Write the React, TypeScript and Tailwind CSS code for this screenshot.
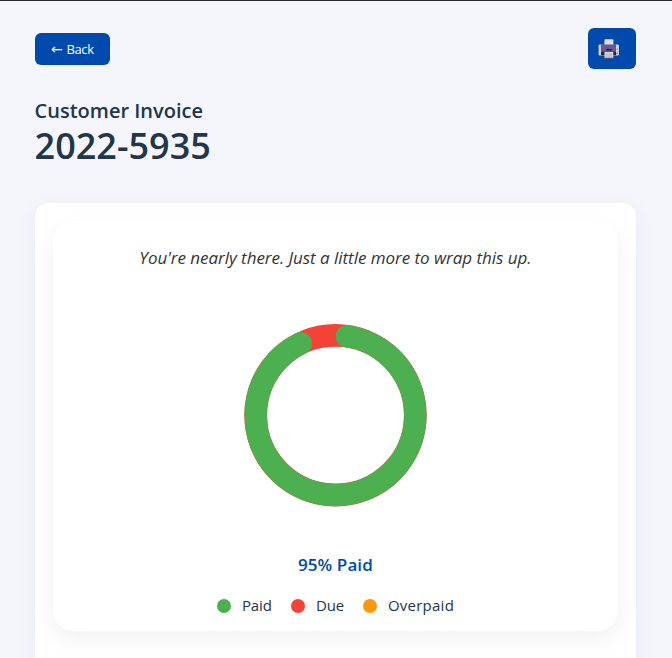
import React from "react";

const legend = [
  { label: "Paid", dot: "bg-[#4caf50]", text: "w-[31px]" },
  { label: "Due", dot: "bg-[#f44336]", text: "w-[29px]" },
  { label: "Overpaid", dot: "bg-[#ff9800]", text: "w-[66px] tracking-[0.25px]" },
];

function PrinterIcon() {
  return (
    <svg width="22" height="20" viewBox="0 0 22 20">
      <rect x="0.6" y="5.5" width="20.3" height="11" rx="1.2" fill="#d5d3d8" />
      <rect x="3" y="5" width="15" height="8.5" fill="#635994" />
      <path d="M3 12.8h15v3.4H3z" fill="#28233d" />
      <rect x="6.4" y="0.2" width="9" height="5.4" rx="0.7" fill="#dedbdd" />
      <rect x="8" y="10" width="6" height="1.5" rx="0.7" fill="#211f32" />
      <path d="M6.5 13h8.8v6H6.5z" fill="#d8d5dc" />
      <path d="M7.5 15.2h6.8M7.5 17h6.8" stroke="#aaa5b2" strokeWidth="0.7" />
      <path d="M6.2 19.2h9.4" stroke="#6a517f" strokeWidth="0.9" />
      <rect x="18.4" y="9" width="1.3" height="2" fill="#b5a9bc" />
      <rect x="18.4" y="13.5" width="1.5" height="1.7" fill="#e85991" />
    </svg>
  );
}

function PaymentRing() {
  return (
    <svg width="184" height="184" viewBox="0 0 184 184">
      <circle cx="92.5" cy="92.2" r="79.8" fill="none" stroke="#f44336" strokeWidth="22.8" />
      <circle
        cx="92.5" cy="92.2" r="79.8" fill="none" stroke="#4caf50" strokeWidth="22.4"
        strokeLinecap="round" pathLength="360" strokeDasharray="326 34" transform="rotate(-81.8 92.5 92.2)"
      />
    </svg>
  );
}

export default function App() {
  return (
    <main className="h-[658px] overflow-hidden border-t border-[#292a2d] bg-[#f4f6fb] px-[34.6px] pt-[27.4px] font-['Open_Sans','Noto_Sans',sans-serif] text-[#22364a]">
      <header className="flex w-[601.8px] items-start justify-between">
        <button className="mt-[5px] flex h-8 w-[75px] items-center justify-center gap-1 rounded-md bg-[#004aad] text-[13px] font-medium tracking-[-0.4px] whitespace-nowrap text-white">
          <span className="w-[12px] font-['DejaVu_Sans'] text-[14px] leading-4 font-normal">←</span>
          <span>Back</span>
        </button>
        <button aria-label="Print" className="flex h-[41px] w-[48.6px] items-center rounded-md bg-[#004aad] pl-[10px]">
          <PrinterIcon />
        </button>
      </header>
      <div className="mt-[27.6px] whitespace-nowrap">
        <h2 className="text-[20px] leading-[28px] font-[550]">Customer Invoice</h2>
        <h1 className="-mt-[0.6px] text-[36px] leading-[44px] font-[550]">2022-5935</h1>
      </div>
      <section className="mt-[34.6px] h-[500px] w-[601.6px] rounded-[14px] bg-white p-[18px] shadow-[0_4px_20px_rgba(0,0,0,0.05)]">
        <div className="flex h-[410px] flex-col items-center rounded-[20px] bg-white shadow-[0_8px_24px_rgba(0,0,0,0.06)]">
          <p className="mt-[25px] text-[17px] leading-6 tracking-[-0.04px] whitespace-nowrap text-[#333] italic">You're nearly there. Just a little more to wrap this up.</p>
          <div className="mt-[53px] h-[184px] w-[184px]"><PaymentRing /></div>
          <p className="mt-[46px] text-[17px] leading-6 font-semibold tracking-[0.1px] text-[#004aad]">95% Paid</p>
          <ul className="mt-4 flex text-[15px] leading-6 tracking-[-0.1px]">
            {legend.map(({ label, dot, text }) => (
              <li key={label} className="mr-[18px] flex items-center last:mr-0">
                <span className={"mt-[3px] mr-[11px] size-[14px] rounded-full " + dot} />
                <span className={"whitespace-nowrap " + text}>{label}</span>
              </li>
            ))}
          </ul>
        </div>
      </section>
    </main>
  );
}
